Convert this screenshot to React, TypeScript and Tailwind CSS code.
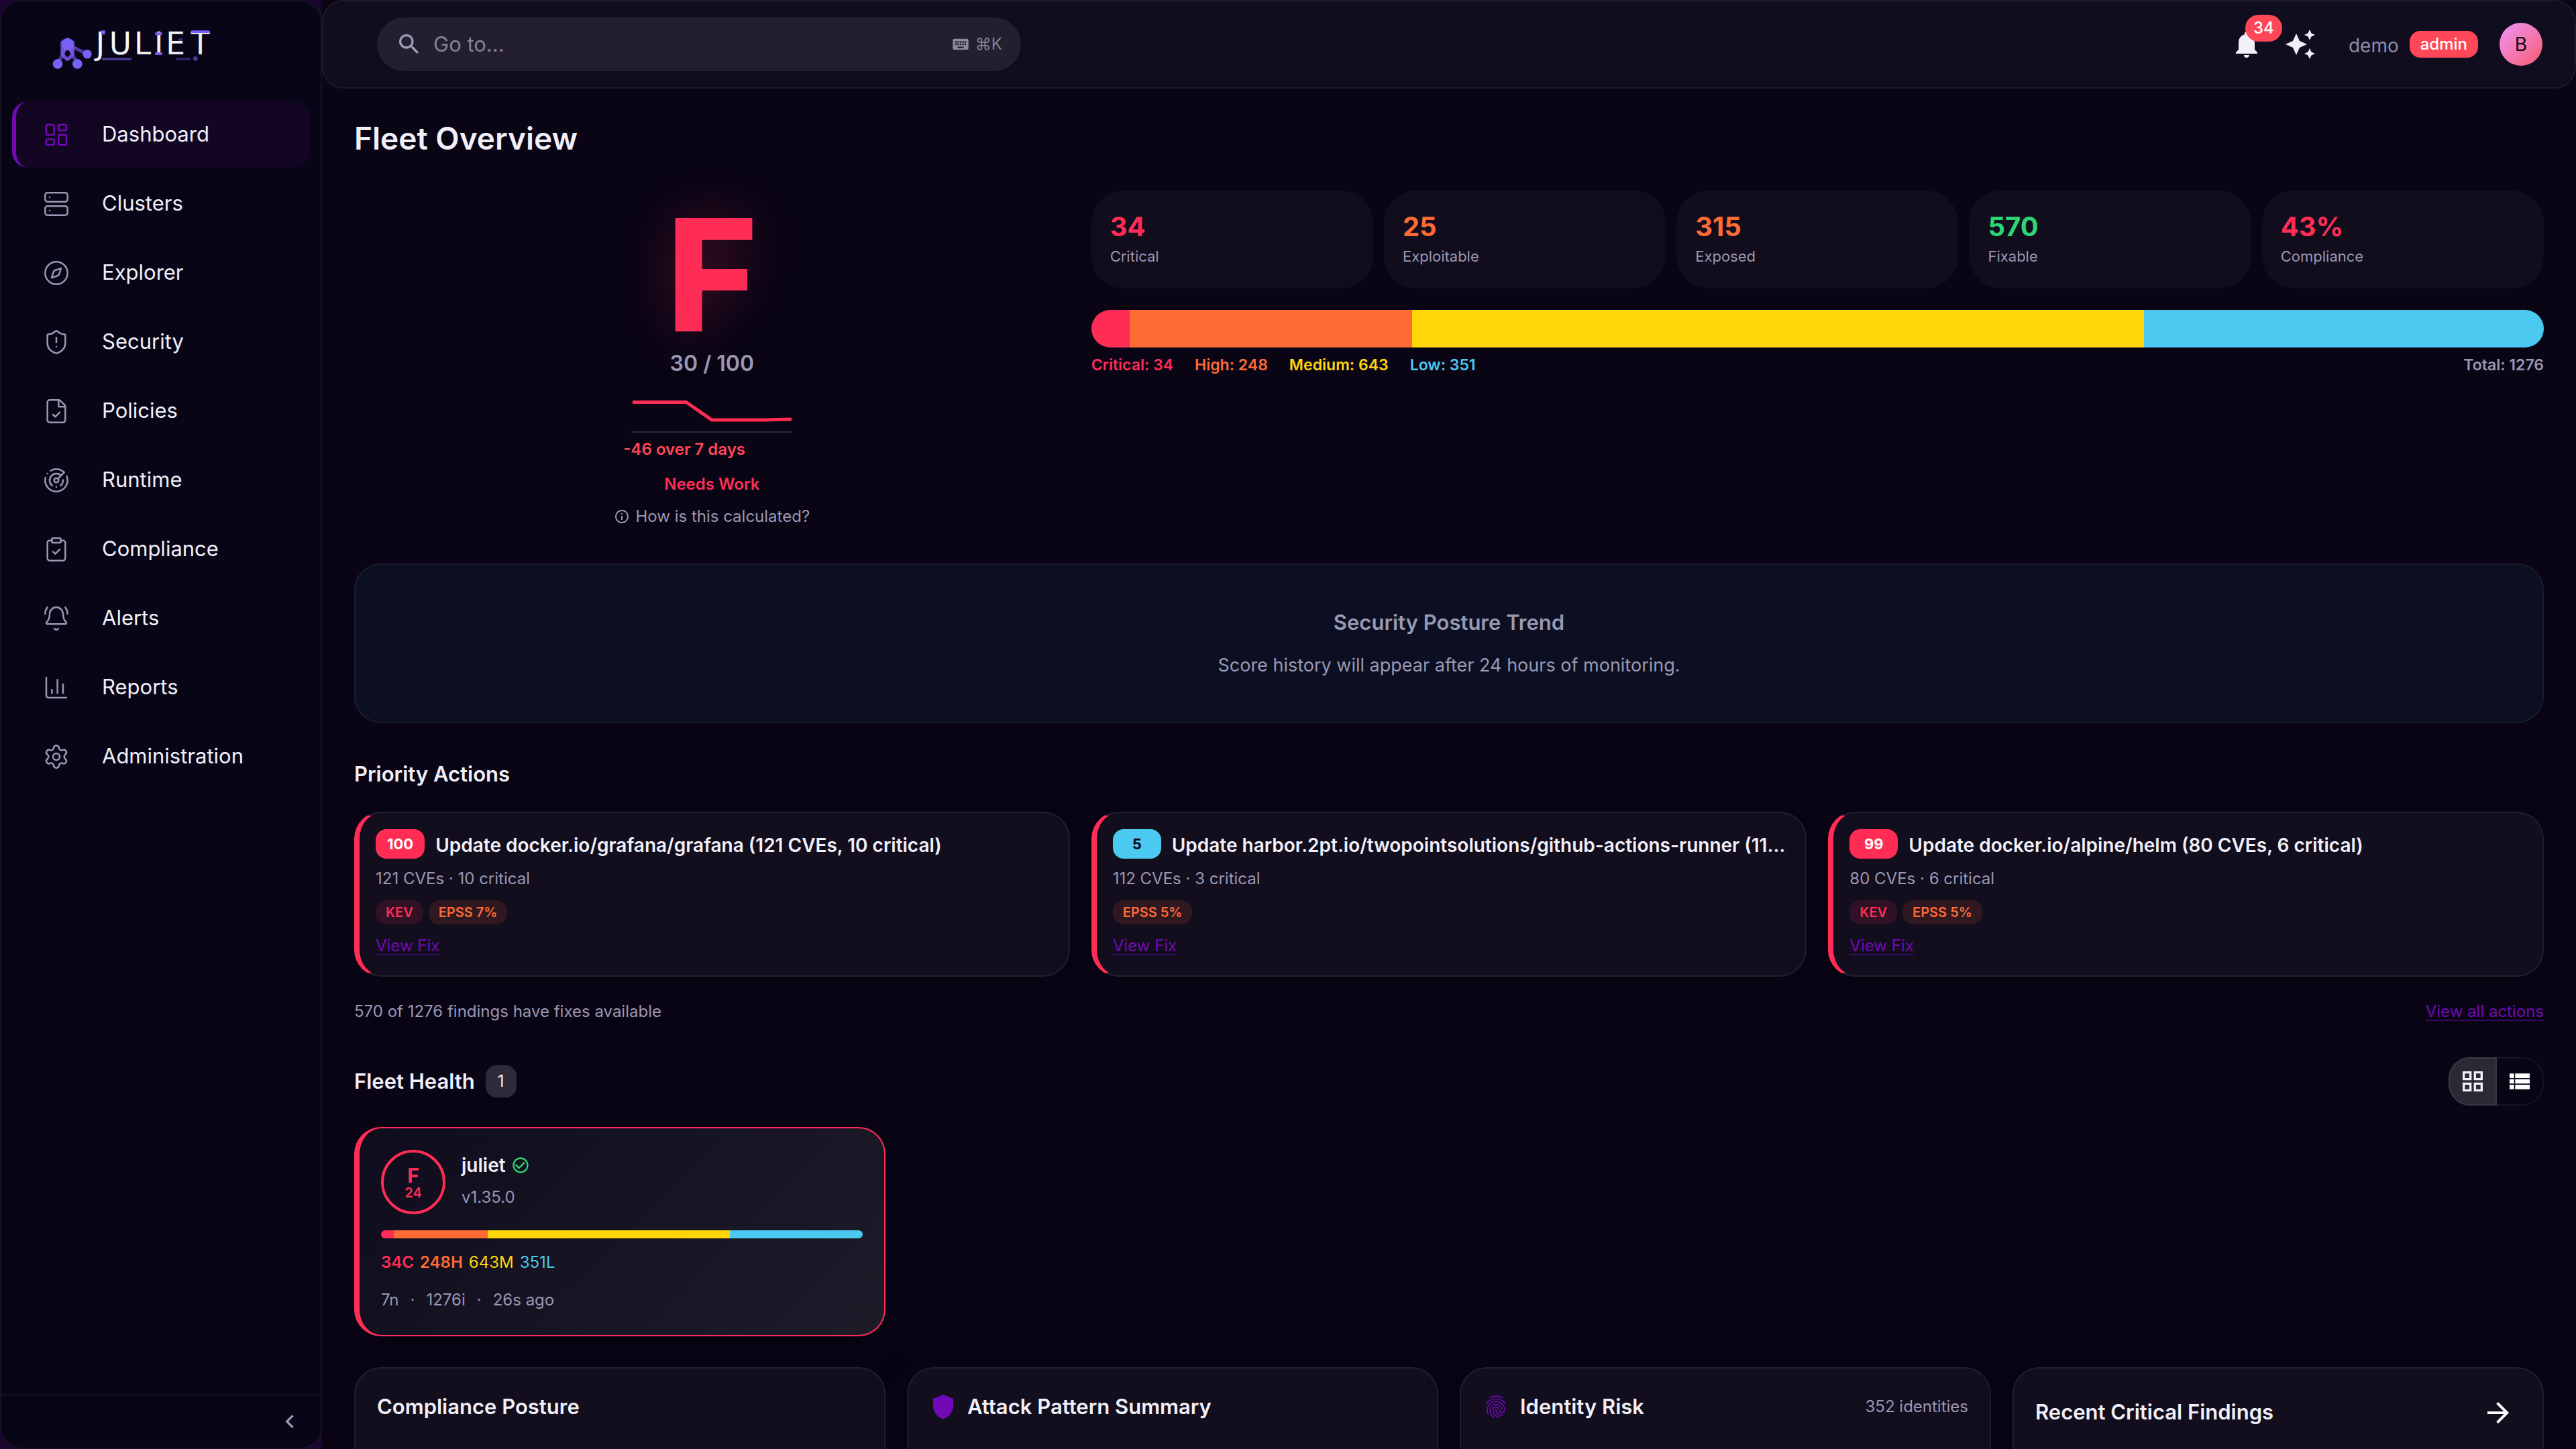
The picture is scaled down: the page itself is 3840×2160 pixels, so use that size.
import type { ReactNode } from "react";
import {
  BellRing,
  ChartColumn,
  ClipboardCheck,
  Compass,
  FileCheck,
  LayoutDashboard,
  Radar,
  Server,
  Settings,
  ShieldAlert,
  type LucideIcon,
} from "lucide-react";
import {
  MdArrowForward,
  MdAutoAwesome,
  MdCheckCircleOutline,
  MdChevronLeft,
  MdFingerprint,
  MdGridView,
  MdInfoOutline,
  MdKeyboard,
  MdNotifications,
  MdSearch,
  MdShield,
  MdViewList,
} from "react-icons/md";

const navItems: { label: string; icon: LucideIcon; active?: boolean }[] = [
  { label: "Dashboard", icon: LayoutDashboard, active: true },
  { label: "Clusters", icon: Server },
  { label: "Explorer", icon: Compass },
  { label: "Security", icon: ShieldAlert },
  { label: "Policies", icon: FileCheck },
  { label: "Runtime", icon: Radar },
  { label: "Compliance", icon: ClipboardCheck },
  { label: "Alerts", icon: BellRing },
  { label: "Reports", icon: ChartColumn },
  { label: "Administration", icon: Settings },
];

const stats = [
  { value: "34", label: "Critical", color: "text-[#ff2d55]" },
  { value: "25", label: "Exploitable", color: "text-[#ff6b35]" },
  { value: "315", label: "Exposed", color: "text-[#ff6b35]" },
  { value: "570", label: "Fixable", color: "text-[#2ed573]" },
  { value: "43%", label: "Compliance", color: "text-[#ff2d55]" },
];

const severities = [
  { name: "Critical", short: "C", count: 34, bg: "bg-[#ff2d55]", text: "text-[#ff2d55]", bold: true },
  { name: "High", short: "H", count: 248, bg: "bg-[#ff6b35]", text: "text-[#ff6b35]", bold: true },
  { name: "Medium", short: "M", count: 643, bg: "bg-[#ffd60a]", text: "text-[#ffd60a]", bold: false },
  { name: "Low", short: "L", count: 351, bg: "bg-[#4cc9f0]", text: "text-[#4cc9f0]", bold: false },
];

const total = severities.reduce((sum, s) => sum + s.count, 0);

const actions = [
  {
    score: 100,
    scoreBg: "bg-[#ff2d55] text-white",
    title: "Update docker.io/grafana/grafana (121 CVEs, 10 critical)",
    meta: "121 CVEs · 10 critical",
    kev: true,
    epss: "EPSS 7%",
  },
  {
    score: 5,
    scoreBg: "bg-[#4cc9f0] text-[#0a0514]",
    title: "Update harbor.2pt.io/twopointsolutions/github-actions-runner (112 CVEs, 3 critical)",
    meta: "112 CVEs · 3 critical",
    kev: false,
    epss: "EPSS 5%",
  },
  {
    score: 99,
    scoreBg: "bg-[#ff2d55] text-white",
    title: "Update docker.io/alpine/helm (80 CVEs, 6 critical)",
    meta: "80 CVEs · 6 critical",
    kev: true,
    epss: "EPSS 5%",
  },
];

function Logo() {
  return (
    <svg viewBox="0 0 840 300" className="h-[100px] w-[280px]" role="img" aria-label="Juliet">
      <defs>
        <linearGradient id="logo-purple" x1="0" y1="0" x2="1" y2="1">
          <stop offset="0" stopColor="#6366f1" />
          <stop offset="1" stopColor="#8b5cf6" />
        </linearGradient>
        <linearGradient id="logo-white" x1="0" y1="0" x2="1" y2="1">
          <stop offset="0" stopColor="#ffffff" />
          <stop offset="1" stopColor="#e2e8f0" />
        </linearGradient>
      </defs>
      {/* Graph mark */}
      <g stroke="#7c5cf6" strokeWidth="15" opacity="0.6">
        <path d="M122 138 78 226M122 138l44 88M122 138l88 44" />
      </g>
      <path
        d="M122 108l31 17v52c0 16-14 27-31 37-17-10-31-21-31-37v-52z M122 162l-13 12v10l13 12 13-12v-10z"
        fill="#7a5af0"
        fillOpacity="0.85"
        fillRule="evenodd"
      />
      <circle cx="122" cy="137" r="27" fill="url(#logo-purple)" />
      <circle cx="78" cy="226" r="22" fill="url(#logo-purple)" />
      <circle cx="166" cy="226" r="22" fill="url(#logo-purple)" />
      <circle cx="210" cy="182" r="20" fill="url(#logo-purple)" />
      {/* Wordmark */}
      <text
        x="248 308 420 510 562 674"
        y="183"
        fontSize="136"
        fill="url(#logo-white)"
        className="font-['DejaVu_Sans',sans-serif]"
      >
        JULIET
      </text>
      <g fill="#7c5cf6">
        <rect x="272" y="76" width="18" height="18" />
        <rect x="514" y="85" width="31" height="12" />
        <rect x="514" y="174" width="31" height="12" />
        <rect x="676" y="76" width="80" height="11" />
        <rect x="276" y="199" width="132" height="10" opacity="0.6" />
        <rect x="606" y="199" width="66" height="10" opacity="0.4" />
        <rect x="619" y="112" width="17" height="12" opacity="0.5" />
        <circle cx="694" cy="202" r="10" opacity="0.6" />
      </g>
    </svg>
  );
}

function Sidebar() {
  return (
    <div className="w-[480px] shrink-0 bg-[#1a0430]">
      <aside className="flex h-full flex-col rounded-[32px] border-2 border-[#161324] bg-[#080516]">
        <a href="#" className="mt-[18px] ml-[58px]">
          <Logo />
        </a>
        <nav className="mt-[31px] flex flex-1 flex-col gap-1 px-4">
          {navItems.map(({ label, icon: Icon, active }) => (
            <a
              key={label}
              href="#"
              className={`flex h-[99px] items-center gap-12 rounded-3xl border-l-[6px] pl-10 text-[31px] text-[#f1eff8] ${
                active ? "border-[#7209b7] bg-[#120623]" : "border-transparent"
              }`}
            >
              <Icon
                className={`size-10 ${active ? "text-[#7209b7]" : "text-[#9a98b3]"}`}
                strokeWidth={1.5}
              />
              {label}
            </a>
          ))}
        </nav>
        <div className="flex h-20 items-center justify-end border-t-2 border-[#161324] pr-[26px]">
          <button type="button" aria-label="Collapse sidebar" className="text-[#9a98b3]">
            <MdChevronLeft className="size-10" />
          </button>
        </div>
      </aside>
    </div>
  );
}

function Header() {
  return (
    <header className="flex h-[132px] shrink-0 items-center rounded-[32px] border-2 border-[#1d1a2b] bg-[#100d1e] pr-12 pl-20">
      <div className="flex h-20 w-[960px] items-center rounded-full bg-[#231f30] px-7">
        <MdSearch className="size-10 shrink-0 text-[#9a9cb8]" />
        <input
          type="text"
          aria-label="Go to"
          placeholder="Go to..."
          className="ml-4 min-w-0 flex-1 bg-transparent text-[31px] text-white outline-none placeholder:text-[#85828d]"
        />
        <MdKeyboard className="size-7 text-[#8f8c97]" />
        <span className="ml-2 text-[24px] text-[#85828d]">⌘K</span>
      </div>
      <div className="ml-auto flex items-center">
        <button type="button" aria-label="Notifications" className="relative text-[#f1eff8]">
          <MdNotifications className="size-12" />
          <span className="absolute -top-5 left-[22px] flex h-10 items-center rounded-[20px] bg-[#ff4757] px-3 text-[24px] font-medium text-white">
            34
          </span>
        </button>
        <button type="button" aria-label="Assistant" className="ml-8 text-[#f1eff8]">
          <MdAutoAwesome className="size-12" />
        </button>
        <span className="ml-12 pt-1 text-[28px] text-[#8f8da8]">demo</span>
        <span className="ml-4 flex h-10 items-center rounded-2xl bg-[#ff4757] px-4 text-[24px] font-medium text-white">
          admin
        </span>
        <button
          type="button"
          aria-label="Account"
          className="ml-8 flex size-16 items-center justify-center rounded-full bg-linear-135 from-[#f093fb] to-[#f5576c] text-[28px] text-[#0a0514]"
        >
          B
        </button>
      </div>
    </header>
  );
}

function SeverityBar({ className }: { className: string }) {
  return (
    <div className={`flex overflow-hidden ${className}`}>
      {severities.map((s) => (
        <div key={s.name} className={s.bg} style={{ width: `${(s.count / total) * 100}%` }} />
      ))}
    </div>
  );
}

function Score() {
  return (
    <div className="flex flex-col items-center pt-4">
      <div className="text-[232px] leading-[220px] font-extrabold text-[#ff2d55] [text-shadow:0_0_80px_rgba(255,45,85,0.25)]">
        F
      </div>
      <div className="mt-0.5 text-[32px] leading-10 font-semibold text-[#9a98b3]">30 / 100</div>
      <div className="mt-6 w-[264px]">
        <svg viewBox="0 0 240 60" className="mx-auto h-[60px] w-[240px]">
          <path d="M0 58H240" stroke="#2a2840" strokeWidth="2" />
          <polyline
            points="4,13.5 82,13.5 120,40 198,40 237,39"
            fill="none"
            stroke="#ff2d55"
            strokeWidth="5"
            strokeLinecap="round"
            strokeLinejoin="round"
          />
        </svg>
        <div className="mt-2 text-[24px] leading-8 font-semibold text-[#ff4757]">-46 over 7 days</div>
      </div>
      <div className="mt-5 text-[24px] leading-8 font-semibold text-[#ff2d55]">Needs Work</div>
      <button type="button" className="mt-4 flex items-center gap-2 text-[24px] leading-8 text-[#9a98b3]">
        <MdInfoOutline className="size-6" />
        How is this calculated?
      </button>
    </div>
  );
}

function Stats() {
  return (
    <div className="col-span-2">
      <div className="grid grid-cols-5 gap-4">
        {stats.map((stat) => (
          <div key={stat.label} className="h-[146px] rounded-[48px] bg-[#110d1d] px-7 pt-7">
            <div className={`text-[40px] leading-[52px] font-bold ${stat.color}`}>{stat.value}</div>
            <div className="mt-1 text-[22px] leading-7 text-[#9a98b3]">{stat.label}</div>
          </div>
        ))}
      </div>
      <SeverityBar className="mt-8 h-14 rounded-full" />
      <div className="mt-3 flex gap-8 text-[23px] leading-7 font-semibold">
        {severities.map((s) => (
          <span key={s.name} className={s.text}>
            {s.name}: {s.count}
          </span>
        ))}
        <span className="ml-auto text-[#9a98b3]">Total: {total}</span>
      </div>
    </div>
  );
}

function ActionCard({ action }: { action: (typeof actions)[number] }) {
  return (
    <article className="min-w-0 rounded-[40px] border-2 border-l-8 border-[#221e2e] border-l-[#ff2d55] bg-[#120e1e] px-6 pt-6 pb-7 shadow-[0_16px_64px_rgba(0,0,0,0.2)]">
      <div className="flex items-center gap-4">
        <span
          className={`flex h-11 min-w-[72px] items-center justify-center rounded-2xl px-[17px] text-[22px] font-bold ${action.scoreBg}`}
        >
          {action.score}
        </span>
        <h3 className="self-end truncate text-[28px] leading-10 font-semibold">{action.title}</h3>
      </div>
      <p className="mt-3.5 text-[24px] leading-8 text-[#9a98b3]">{action.meta}</p>
      <div className="mt-4 flex gap-2 text-[20px] font-semibold">
        {action.kev && (
          <span className="flex h-9 items-center rounded-2xl bg-[#301125] px-[15px] text-[#ff2d55]">KEV</span>
        )}
        <span className="flex h-9 items-center rounded-2xl bg-[#301820] px-[15px] text-[#ff6b35]">{action.epss}</span>
      </div>
      <a
        href="#"
        className="mt-4 inline-block text-[24px] leading-8 text-[#7209b7] underline decoration-[#7209b7]/50 decoration-2 underline-offset-4"
      >
        View Fix
      </a>
    </article>
  );
}

function ClusterCard() {
  return (
    <article className="rounded-[40px] border-2 border-l-8 border-[#ff2d55] bg-linear-135 from-[#0f0c1d] to-[#1f1b29] px-8 pt-8 pb-9 shadow-[0_16px_64px_rgba(0,0,0,0.2)]">
      <div className="flex items-center gap-6">
        <div className="flex size-24 flex-col items-center justify-center rounded-full border-4 border-[#ff2d55] text-[#ff2d55]">
          <span className="text-[30px] leading-8 font-bold">F</span>
          <span className="text-[20px] leading-5 font-semibold">24</span>
        </div>
        <div className="pb-1.5">
          <div className="flex items-center gap-2">
            <h3 className="text-[28px] leading-10 font-semibold">juliet</h3>
            <MdCheckCircleOutline className="size-7 text-[#2ed573]" />
          </div>
          <p className="mt-3 text-[24px] leading-8 text-[#9a98b3]">v1.35.0</p>
        </div>
      </div>
      <SeverityBar className="mt-6 h-3 rounded-full" />
      <div className="mt-5 flex gap-[9px] text-[24px] leading-8">
        {severities.map((s) => (
          <span key={s.name} className={`${s.text} ${s.bold ? "font-semibold" : ""}`}>
            {s.count}
            {s.short}
          </span>
        ))}
      </div>
      <div className="mt-6 flex gap-[17px] text-[24px] leading-8 text-[#9a98b3]">
        <span>7n</span>
        <span>·</span>
        <span>1276i</span>
        <span>·</span>
        <span>26s ago</span>
      </div>
    </article>
  );
}

function Panel({ title, icon, extra }: { title: string; icon?: ReactNode; extra?: ReactNode }) {
  return (
    <section className="h-[400px] rounded-[40px] border-2 border-[#221e2e] bg-[#120e1e] p-8 shadow-[0_16px_64px_rgba(0,0,0,0.2)]">
      <div className="flex items-center gap-4">
        {icon}
        <h2 className="flex-1 text-[31px] leading-[50px] font-semibold">{title}</h2>
        {extra}
      </div>
    </section>
  );
}

export default function App() {
  return (
    <div className="flex h-screen overflow-hidden bg-[#090515] font-[Inter,sans-serif] text-[#f1eff8]">
      <Sidebar />
      <div className="flex min-w-0 flex-1 flex-col">
        <Header />
        <main className="flex-1 overflow-y-auto px-12 pt-[46px] pb-12 [scrollbar-width:none]">
          <h1 className="text-[46px] leading-[56px] font-semibold">Fleet Overview</h1>

          <section className="mt-[50px] grid grid-cols-3 gap-8">
            <Score />
            <Stats />
          </section>

          <section className="mt-[54px] rounded-[40px] border-2 border-[#1b1c30] bg-[#0b0f21] pt-[66px] pb-16 text-center text-[#9a98b3]">
            <h2 className="text-[31px] leading-10 font-semibold">Security Posture Trend</h2>
            <p className="mt-6 text-[27px] leading-10">Score history will appear after 24 hours of monitoring.</p>
          </section>

          <h2 className="mt-14 text-[31px] leading-10 font-semibold">Priority Actions</h2>
          <div className="mt-9 grid grid-cols-3 gap-8">
            {actions.map((action) => (
              <ActionCard key={action.title} action={action} />
            ))}
          </div>
          <div className="mt-9 flex justify-between text-[24px] leading-8">
            <span className="text-[#9a98b3]">570 of 1276 findings have fixes available</span>
            <a
              href="#"
              className="text-[#7209b7] underline decoration-[#7209b7]/50 decoration-2 underline-offset-4"
            >
              View all actions
            </a>
          </div>

          <div className="mt-13 flex h-[72px] items-center">
            <h2 className="text-[31px] font-semibold">Fleet Health</h2>
            <span className="ml-4 flex h-12 items-center rounded-2xl bg-[#2e2a3a] px-[18px] text-[24px]">1</span>
            <div className="ml-auto flex h-[72px]">
              <button
                type="button"
                aria-label="Grid view"
                className="flex w-[72px] items-center justify-center rounded-l-[32px] border-2 border-[#3a3744] bg-[#2c2936]"
              >
                <MdGridView className="size-10" />
              </button>
              <button
                type="button"
                aria-label="List view"
                className="flex w-[70px] items-center justify-center rounded-r-[32px] border-2 border-l-0 border-[#181425] text-white"
              >
                <MdViewList className="size-10" />
              </button>
            </div>
          </div>

          <div className="mt-8 grid grid-cols-4 gap-8">
            <ClusterCard />
          </div>

          <div className="mt-[46px] grid grid-cols-4 gap-8">
            <Panel title="Compliance Posture" />
            <Panel title="Attack Pattern Summary" icon={<MdShield className="size-10 text-[#7209b7]" />} />
            <Panel
              title="Identity Risk"
              icon={<MdFingerprint className="size-10 text-[#7209b7]" />}
              extra={<span className="text-[24px] text-[#9a98b3]">352 identities</span>}
            />
            <Panel
              title="Recent Critical Findings"
              extra={
                <button type="button" aria-label="Open findings" className="-mt-1.5 -mr-1.5 -mb-2 p-4 text-white">
                  <MdArrowForward className="size-12" />
                </button>
              }
            />
          </div>
        </main>
      </div>
    </div>
  );
}
